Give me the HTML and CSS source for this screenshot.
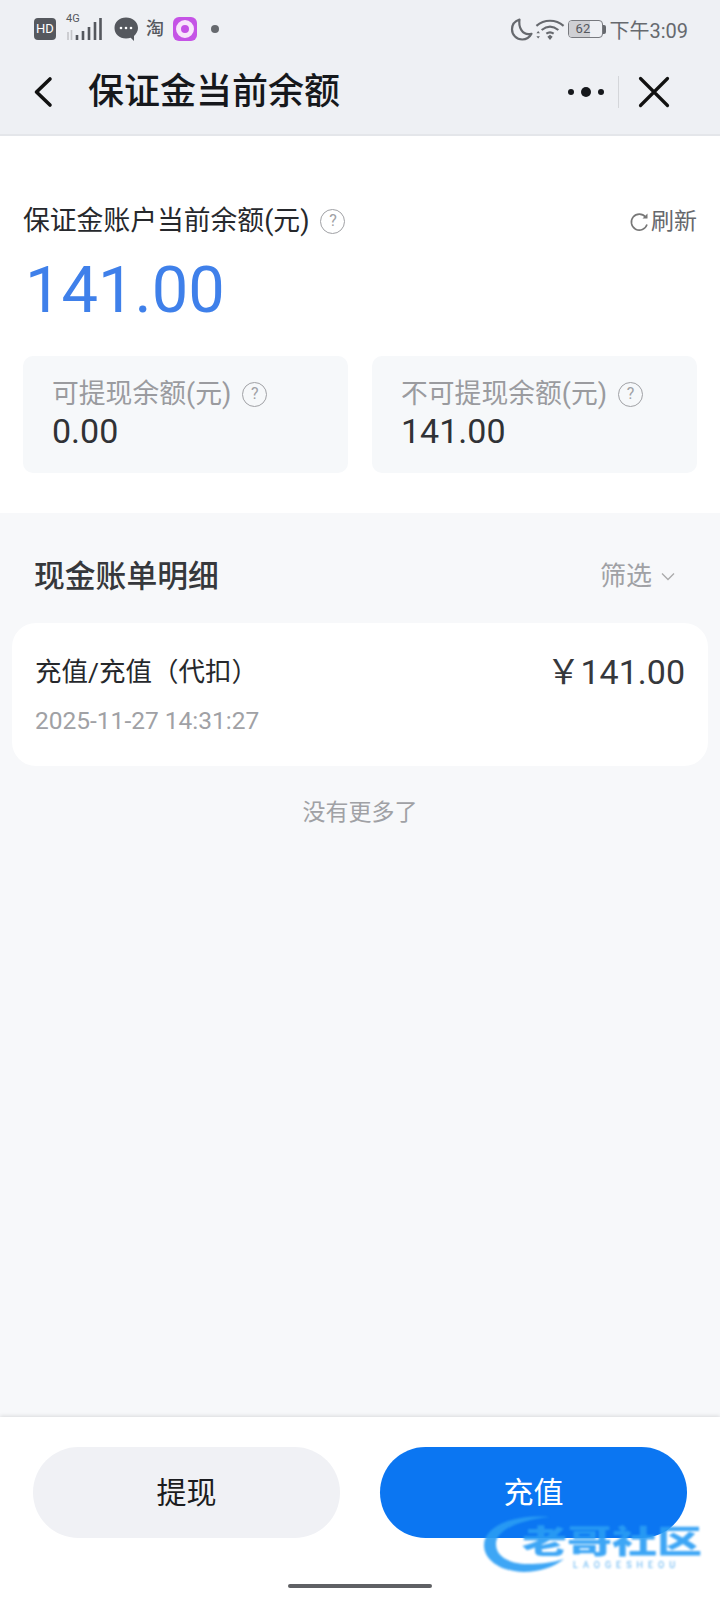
FILE: index.html
```html
<!DOCTYPE html>
<html lang="zh-CN">
<head>
    <meta charset="UTF-8">
    <meta name="viewport" content="width=device-width, initial-scale=1.0">
    <title>保证金当前余额</title>
    <link rel="stylesheet" href="styles.css">
</head>
<body>
<div class="page">

    <div class="top">
        <div class="status">
            <div class="status-left">
                <span class="hd">HD</span>
                <span class="signal">
                    <span class="net">4G</span>
                    <svg width="36" height="24" viewBox="0 0 36 24">
                        <path d="M2 15v8M5.500 13v10" stroke="#c4c5c9" stroke-width="1.600" fill="none"/>
                        <path d="M11 18v5M17 14v9M23 10v13M29 5v18M34.500 1v22" stroke="#55585e" stroke-width="2.600" fill="none"/>
                    </svg>
                </span>
                <svg class="bubble" width="26" height="26" viewBox="0 0 26 26">
                    <path d="M13 1.500C6.400 1.500 1.500 6 1.500 12s4.900 10.500 11.500 10.500c1.700 0 3.300-.3 4.700-.8l3.300 3.300v-5.100c2.400-2 4-4.800 4-7.900C25 6 19.600 1.500 13 1.500z" fill="#55585e"/>
                    <circle cx="8" cy="12" r="1.300" fill="#fff"/>
                    <circle cx="13" cy="12" r="1.300" fill="#fff"/>
                    <circle cx="18" cy="12" r="1.300" fill="#fff"/>
                </svg>
                <span class="tao">淘</span>
                <span class="purple"><span class="purple-ring"></span></span>
                <span class="dot"></span>
            </div>
            <div class="status-right">
                <svg width="24" height="24" viewBox="0 0 24 24">
                    <path d="M9.500 2.500C5 4 2 7.800 2 12.300 2 18 6.600 22.500 12.200 22.500c4 0 7.500-2.300 9.300-5.700-1 .3-2 .4-3 .4-6 0-10.300-6.500-9-14.700z" fill="none" stroke="#66696e" stroke-width="2.200" stroke-linejoin="round"/>
                </svg>
                <svg class="wifi" width="30" height="23" viewBox="0 0 28 22">
                    <path d="M1 7.500C8.500 1 19.500 1 27 7.500M6 11.500c5-4 11-4 16 0M10.500 15c2.500-1.800 4.500-1.800 7 0" fill="none" stroke="#66696e" stroke-width="2"/>
                    <path d="M11.500 18l2.500-2 2.500 2-2.500 3z" fill="#66696e"/>
                    <path d="M1 14.500l1.700-2 1.700 2zM1 17.500l1.700 2 1.700-2z" fill="#66696e"/>
                </svg>
                <span class="battery">
                    <span class="battery-fill"></span>
                    <span class="battery-num">62</span>
                </span>
                <span class="battery-tip"></span>
                <span class="clock">下午3:09</span>
            </div>
        </div>

        <div class="nav">
            <svg class="nav-back" width="20" height="32" viewBox="0 0 20 32">
                <path d="M17 3L3.500 16 17 29" fill="none" stroke="#111" stroke-width="3.600" stroke-linecap="round" stroke-linejoin="round"/>
            </svg>
            <div class="nav-title">保证金当前余额</div>
            <div class="nav-more">
                <span class="more-dot"></span>
                <span class="more-dot more-dot-big"></span>
                <span class="more-dot"></span>
            </div>
            <span class="nav-line"></span>
            <svg class="nav-close" width="32" height="32" viewBox="0 0 32 32">
                <path d="M2.500 2.500l27 27M29.500 2.500l-27 27" fill="none" stroke="#111" stroke-width="3.200" stroke-linecap="round"/>
            </svg>
        </div>
    </div>

    <div class="summary">
        <div class="summary-head">
            <div class="summary-label">保证金账户当前余额(元)<span class="help">?</span></div>
            <div class="refresh">
                <svg width="20" height="22" viewBox="0 0 20 22">
                    <path d="M16.500 6A8 8 0 1 0 18 13.500" fill="none" stroke="#777" stroke-width="1.600"/>
                    <path d="M18.500 2.500v5h-5z" fill="#777"/>
                </svg>
                <span>刷新</span>
            </div>
        </div>
        <div class="summary-amount">141.00</div>
        <div class="boxes">
            <div class="box">
                <div class="box-label">可提现余额(元)<span class="help">?</span></div>
                <div class="box-value">0.00</div>
            </div>
            <div class="box">
                <div class="box-label">不可提现余额(元)<span class="help">?</span></div>
                <div class="box-value">141.00</div>
            </div>
        </div>
    </div>

    <div class="bills">
        <div class="bills-head">
            <div class="bills-title">现金账单明细</div>
            <div class="filter">
                <span>筛选</span>
                <svg width="14" height="9" viewBox="0 0 14 9">
                    <path d="M1 1.500l6 6 6-6" fill="none" stroke="#aaa" stroke-width="1.300"/>
                </svg>
            </div>
        </div>
        <div class="bill-card">
            <div class="bill-row">
                <div class="bill-name">充值/充值（代扣）</div>
                <div class="bill-money">￥141.00</div>
            </div>
            <div class="bill-date">2025-11-27 14:31:27</div>
        </div>
        <div class="no-more">没有更多了</div>
    </div>

    <div class="footer">
        <div class="buttons">
            <div class="btn btn-gray">提现</div>
            <div class="btn btn-blue">充值</div>
        </div>
        <div class="home-bar"></div>
    </div>

    <div class="watermark">
        <svg class="wm-swirl" width="84" height="62" viewBox="0 0 84 62">
            <path d="M66 5C30 2 0 14 0 33c0 17 20 27 40 27 15 0 30-5 40-13-12 4-25 5-36 5-18 0-32-7-32-20C12 18 35 8 66 5z" fill="#2a9df4"/>
        </svg>
        <div class="wm-text">
            <div class="wm-name">老哥社区</div>
            <div class="wm-sub">LAOGESHEOU</div>
        </div>
    </div>

</div>
</body>
</html>
```

FILE: styles.css
```css
* {
    box-sizing: border-box;
}
body {
    margin: 0;
    background-color: #fff;
    font-family: Roboto, "Noto Sans CJK SC", sans-serif;
}
.page {
    position: relative;
    width: 720px;
    height: 1600px;
    display: flex;
    flex-direction: column;
    overflow: hidden;
}

/* status bar + title */
.top {
    height: 136px;
    background-color: #eef0f4;
    border-bottom: 2px solid #e4e6ea;
}
.status {
    height: 58px;
    padding: 0 32px 0 34px;
    display: flex;
    justify-content: space-between;
    align-items: center;
}
.status-left, .status-right {
    display: flex;
    align-items: center;
}
.hd {
    width: 22px;
    height: 22px;
    border-radius: 4px;
    background-color: #55585e;
    color: #fff;
    font-size: 13px;
    line-height: 22px;
    text-align: center;
}
.signal {
    position: relative;
    width: 36px;
    height: 24px;
    margin-left: 10px;
}
.signal svg {
    display: block;
}
.net {
    position: absolute;
    left: 0;
    top: -5px;
    font-size: 11px;
    line-height: 14px;
    color: #55585e;
}
.bubble {
    margin-left: 11px;
}
.tao {
    margin-left: 7px;
    font-size: 18px;
    line-height: 22px;
    font-weight: 500;
    color: #55585e;
}
.purple {
    width: 24px;
    height: 24px;
    margin-left: 9px;
    border-radius: 6px;
    background-color: #c553e6;
    display: flex;
    align-items: center;
    justify-content: center;
}
.purple-ring {
    width: 18px;
    height: 18px;
    border-radius: 50%;
    border: 5.500px solid #f8e6fb;
    background-color: #c553e6;
}
.dot {
    width: 8px;
    height: 8px;
    margin-left: 14px;
    border-radius: 50%;
    background-color: #66696e;
}
.wifi {
    margin-left: 1px;
}
.battery {
    position: relative;
    width: 35px;
    height: 18px;
    margin-left: 3px;
    border: 1.500px solid #77797e;
    border-radius: 4px;
    overflow: hidden;
}
.battery-fill {
    position: absolute;
    left: 0;
    top: 0;
    bottom: 0;
    width: 62%;
    background-color: #cfd0d4;
}
.battery-num {
    position: absolute;
    left: 0;
    right: 6px;
    top: 0;
    font-size: 13px;
    line-height: 15px;
    text-align: center;
    color: #55585e;
}
.battery-tip {
    width: 3px;
    height: 9px;
    border-radius: 0 2px 2px 0;
    background-color: #66696e;
}
.clock {
    margin-left: 3px;
    font-size: 20px;
    color: #66696e;
}
.nav {
    height: 75px;
    display: flex;
    align-items: center;
    padding: 0 0 8px 33px;
}
.nav-title {
    margin-left: 35px;
    font-size: 36px;
    line-height: 44px;
    font-weight: 500;
    color: #16181c;
}
.nav-more {
    margin-left: auto;
    display: flex;
    align-items: center;
    gap: 7px;
}
.more-dot {
    width: 6px;
    height: 6px;
    border-radius: 50%;
    background-color: #16181c;
}
.more-dot-big {
    width: 10px;
    height: 10px;
}
.nav-line {
    width: 1px;
    height: 32px;
    margin-left: 14px;
    background-color: #d4d6da;
}
.nav-close {
    margin-left: 19px;
    margin-right: 50px;
}

/* saldo */
.summary {
    height: 377px;
    padding: 67px 23px 0;
    background-color: #fff;
}
.summary-head {
    display: flex;
    justify-content: space-between;
    align-items: center;
    height: 36px;
}
.summary-label {
    display: flex;
    align-items: center;
    font-size: 26.800px;
    line-height: 36px;
    color: #26282c;
}
.help {
    width: 25px;
    height: 25px;
    margin-left: 11px;
    border: 1.500px solid #a0a1a5;
    border-radius: 50%;
    font-size: 16px;
    line-height: 22px;
    text-align: center;
    color: #a0a1a5;
}
.refresh {
    display: flex;
    align-items: center;
    font-size: 23px;
    line-height: 32px;
    color: #66686c;
    margin-top: 1px;
}
.refresh svg {
    margin-right: 2px;
}
.summary-amount {
    margin-top: 16px;
    padding-left: 2px;
    font-size: 65px;
    line-height: 70px;
    color: #3f80ea;
}
.boxes {
    margin-top: 31px;
    display: flex;
    gap: 24px;
}
.box {
    flex: 1;
    height: 117px;
    padding: 22px 0 0 29px;
    background-color: #f6f8fa;
    border-radius: 10px;
}
.box-label {
    display: flex;
    align-items: center;
    font-size: 26.800px;
    line-height: 32px;
    color: #9a9b9f;
}
.box-value {
    font-size: 34px;
    line-height: 42px;
    color: #303236;
}

/* bills */
.bills {
    flex: 1;
    padding: 0 12px;
    background-color: #f7f8fa;
}
.bills-head {
    height: 110px;
    padding: 10px 33px 0 22px;
    display: flex;
    justify-content: space-between;
    align-items: center;
}
.bills-title {
    font-size: 30.800px;
    font-weight: 500;
    color: #36383c;
}
.filter {
    display: flex;
    align-items: center;
    gap: 9px;
    font-size: 26px;
    color: #a0a1a5;
}
.filter svg {
    margin-top: 6px;
}
.bill-card {
    height: 143px;
    padding: 26px 23px 0 23px;
    background-color: #fff;
    border-radius: 24px;
}
.bill-row {
    display: flex;
    justify-content: space-between;
    align-items: center;
    height: 40px;
}
.bill-name {
    font-size: 26.500px;
    color: #26282c;
}
.bill-money {
    font-size: 34px;
    color: #36383c;
}
.bill-date {
    margin-top: 15px;
    font-size: 24.500px;
    line-height: 34px;
    color: #a0a1a5;
}
.no-more {
    margin-top: 30px;
    text-align: center;
    font-size: 23px;
    line-height: 34px;
    color: #a0a1a5;
}

/* bottom buttons */
.footer {
    position: relative;
    height: 183px;
    padding-top: 30px;
    background-color: #fff;
    box-shadow: 0 -1px 4px rgba(0,0,0,0.12);
}
.buttons {
    display: flex;
    justify-content: space-between;
    padding: 0 33px;
}
.btn {
    width: 307px;
    height: 91px;
    border-radius: 46px;
    font-size: 30px;
    line-height: 91px;
    text-align: center;
}
.btn-gray {
    background-color: #f0f1f5;
    color: #1b1c20;
}
.btn-blue {
    background-color: #0b76f2;
    color: #fff;
}
.home-bar {
    width: 144px;
    height: 4px;
    margin: 46px auto 0;
    border-radius: 2px;
    background-color: #5f6064;
}

/* site stamp lying over the screenshot */
.watermark {
    position: absolute;
    left: 484px;
    top: 1512px;
    width: 225px;
    height: 62px;
    opacity: 0.9;
    filter: blur(1px);
}
.wm-swirl {
    position: absolute;
    left: 0;
    top: 0;
}
.wm-text {
    position: absolute;
    left: 38px;
    top: 15px;
    width: 182px;
}
.wm-name {
    height: 32px;
    font-size: 45px;
    line-height: 44px;
    font-weight: 900;
    color: #2a9df4;
    white-space: nowrap;
    transform: scaleY(0.7);
    transform-origin: top left;
}
.wm-sub {
    margin-left: 51px;
    font-size: 9px;
    line-height: 12px;
    letter-spacing: 5px;
    color: #4aa8f0;
    white-space: nowrap;
}
```
